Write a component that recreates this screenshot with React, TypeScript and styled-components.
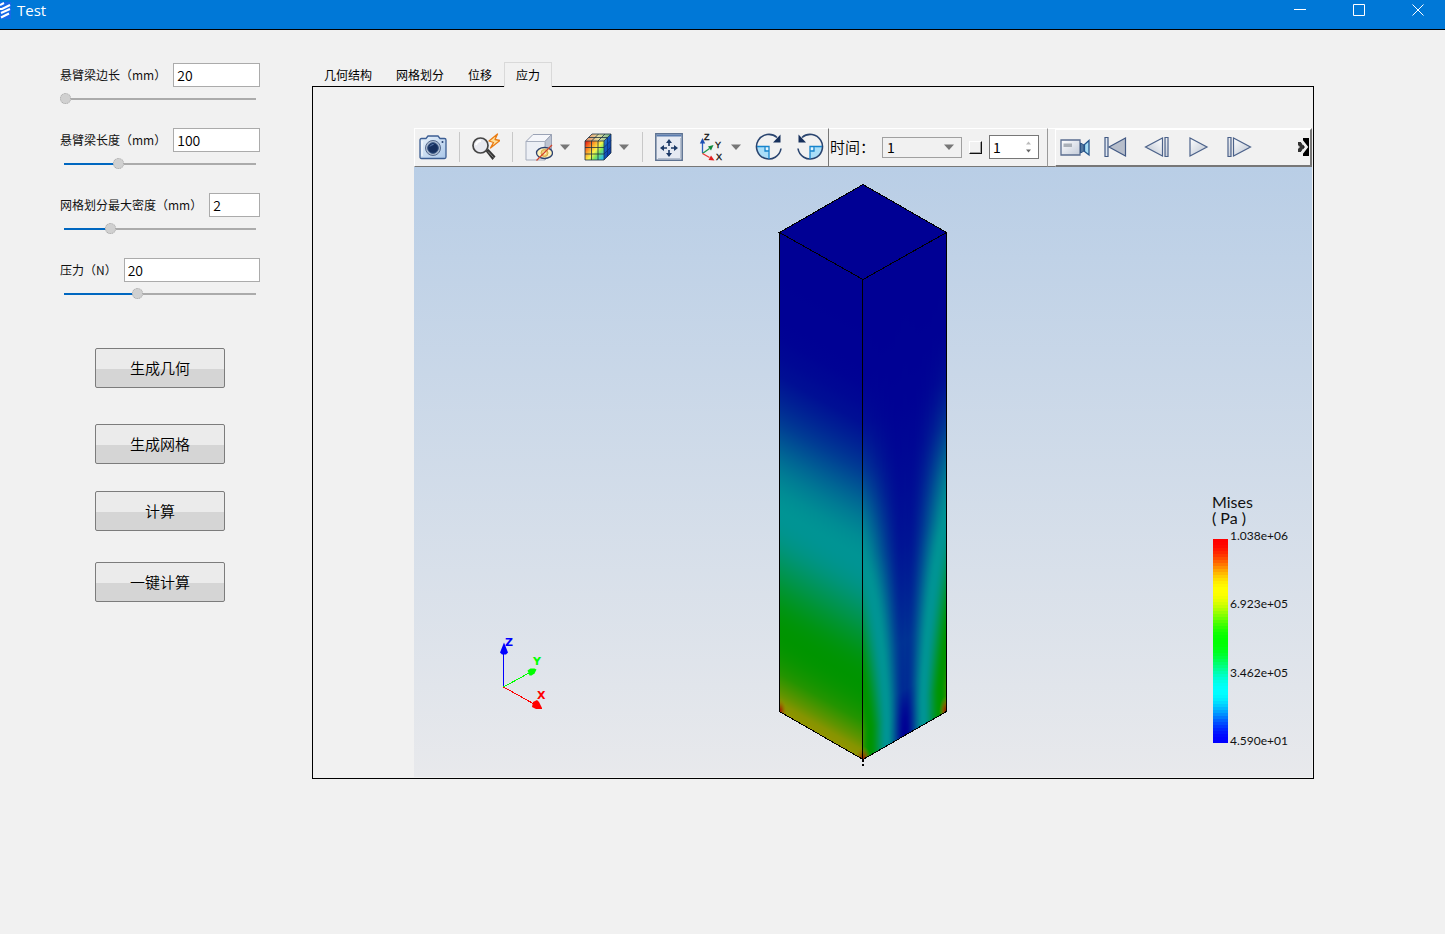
import React, { useState } from 'react';
import styled, { createGlobalStyle } from 'styled-components';

const GlobalStyle = createGlobalStyle`
  *, *::before, *::after { box-sizing: border-box; }
  body {
    margin: 0;
    background: #f1f1f1;
    color: #111;
    font-family: 'Noto Sans CJK SC', 'Noto Sans', sans-serif;
    font-size: 12px;
  }
  button, input, select { font: inherit; color: inherit; margin: 0; padding: 0; }
`;

/* ---------- window frame ---------- */

const TitleBar = styled.header`
  display: flex;
  justify-content: space-between;
  height: 30px;
  background: #0078d7;
  border-bottom: 1px solid #000;
  color: #fff;
`;

const Caption = styled.h1`
  display: flex;
  gap: 6px;
  margin: 0;
  font: 400 15px/20px 'Open Sans', 'Noto Sans', sans-serif;
`;

const AppLogo = styled.svg`
  width: 11px;
  height: 21px;
`;

const WindowControls = styled.div`
  display: flex;
  gap: 5px;
`;

const WindowButton = styled.button`
  display: flex;
  justify-content: center;
  width: 54px;
  height: 20px;
  border: 0;
  background: none;
  color: #fff;
`;

/* ---------- page ---------- */

const Page = styled.main`
  display: flex;
  gap: 52px;
  padding: 32px 131px 32px 60px;
`;

const Sidebar = styled.form`
  flex: none;
  width: 200px;
`;

const Fields = styled.div`
  display: flex;
  flex-direction: column;
  gap: 24px;
  padding-top: 1px;
`;

const FieldRow = styled.div`
  display: flex;
  align-items: center;
  gap: 7px;
  height: 24px;
`;

const FieldLabel = styled.label`
  flex: none;
  white-space: nowrap;
  line-height: 24px;
`;

const TextBox = styled.input`
  flex: 1;
  min-width: 0;
  height: 24px;
  padding: 0 3px;
  border: 1px solid #ababab;
  background: #fff;
  color: #000;
  font-size: 14px;
  font-weight: 350;
`;

const Slider = styled.input<{ $fill: number }>`
  appearance: none;
  display: block;
  width: 100%;
  height: 11px;
  margin-top: 6px;
  background: linear-gradient(to right, #0067c0 ${p => p.$fill}%, #ababab ${p => p.$fill}%)
    center / calc(100% - 8px) 2px no-repeat;
  &::-webkit-slider-thumb {
    appearance: none;
    width: 11px;
    height: 11px;
    border: 1px dotted #a8a8a8;
    border-radius: 50%;
    background: #d0d0d0;
  }
`;

const Actions = styled.div`
  display: flex;
  flex-direction: column;
  align-items: center;
  margin-top: 49px;
`;

const ActionButton = styled.button<{ $above: number }>`
  width: 130px;
  height: 40px;
  margin-top: ${p => p.$above}px;
  padding-bottom: 2px;
  border: 1px solid #7c7c7c;
  border-radius: 2px;
  background: linear-gradient(#ebebeb 0 53%, #d5d5d5 53%);
  color: #000;
  font-size: 15px;
  font-weight: 350;
`;

/* ---------- tabs ---------- */

const Workspace = styled.section`
  flex: 1;
  min-width: 0;
`;

const TabList = styled.div`
  display: flex;
  position: relative;
  z-index: 1;
`;

const Tab = styled.button<{ $active: boolean }>`
  height: 25px;
  margin-bottom: -1px;
  padding: 0 11px 2px;
  border: 1px solid ${p => (p.$active ? '#d9d9d9' : 'transparent')};
  border-bottom: 0;
  background: ${p => (p.$active ? '#f1f1f1' : 'none')};
  color: #000;
`;

const TabPanel = styled.div`
  padding: 41px 1px 1px 101px;
  border: 1px solid #000;
`;

/* ---------- toolbar ---------- */

const Toolbar = styled.div`
  display: flex;
  height: 39px;
`;

const ToolSection = styled.div`
  display: flex;
  align-items: center;
  gap: 13px;
  padding: 0 4px 1px;
  border-top: 1px solid #fff;
  border-left: 1px solid #fff;
  border-bottom: 1px solid #777;
`;

const TimeSection = styled(ToolSection)`
  gap: 7px;
  flex: none;
  width: 220px;
  padding: 0 8px 1px 1px;
  border-left: 1px solid #777;
  border-right: 1px solid #999;
`;

const ToolGap = styled.div`
  width: 7px;
  border-top: 1px solid #fff;
  border-bottom: 1px solid #777;
`;

const PlaySection = styled(ToolSection)`
  flex: 1;
  min-width: 0;
  gap: 13px;
  padding: 0 1px 1px 4px;
  border-top-width: 2px;
  border-bottom-width: 2px;
  border-right: 2px solid #777;
`;

const ToolDivider = styled.span`
  width: 1px;
  height: 30px;
  margin: 0 -1px;
  background: #c8c8c8;
`;

const ToolButton = styled.button<{ $w?: number }>`
  display: flex;
  flex: none;
  align-items: center;
  width: ${p => p.$w ?? 28}px;
  height: 28px;
  border: 0;
  background: none;
`;

const MenuButton = styled(ToolButton)`
  width: 46px;
  gap: 6px;
`;

const MoreButton = styled(ToolButton)`
  width: 11px;
  margin-left: auto;
`;

const TimeLabel = styled.label`
  flex: none;
  width: 45px;
  font-size: 15px;
  font-weight: 350;
  line-height: 20px;
  color: #000;
  white-space: nowrap;
`;

const SelectBox = styled.span`
  display: flex;
  align-items: center;
  flex: 1;
  height: 21px;
  padding-right: 6px;
  border: 1px solid #a0a0a0;
`;

const TimeSelect = styled.select`
  appearance: none;
  flex: 1;
  min-width: 0;
  height: 19px;
  padding-left: 4px;
  border: 0;
  background: none;
  color: #000;
  font-size: 14px;
  line-height: 19px;
`;

const LoopBox = styled.input`
  appearance: none;
  width: 13px;
  height: 13px;
  border: 1px solid #fff;
  border-right: 1px solid #111;
  border-bottom: 1px solid #111;
  box-shadow: inset -1px -1px #a0a0a0;
`;

const SpinBox = styled.span`
  display: flex;
  align-items: center;
  width: 50px;
  height: 24px;
  padding-right: 6px;
  border: 1px solid #777;
  background: #fff;
`;

const SpinInput = styled.input`
  flex: 1;
  min-width: 0;
  height: 22px;
  padding-left: 3px;
  border: 0;
  background: none;
  color: #000;
  font-size: 14px;
`;

/* ---------- 3D view ---------- */

const Viewport = styled.div`
  display: grid;
  grid-template-columns: 1fr auto 1fr;
  height: 610px;
  background: linear-gradient(#b9cee6, #e8e9ec);
`;

const TriadArea = styled.div`
  align-self: end;
  padding: 0 0 64px 84px;
  line-height: 0;
`;

const BeamArea = styled.div`
  padding-top: 16px;
`;

const Legend = styled.div`
  justify-self: end;
  align-self: end;
  width: 101px;
  padding-bottom: 29px;
  font-family: Lato, 'Noto Sans', sans-serif;
`;

const LegendTitle = styled.div`
  margin-bottom: 3px;
  padding-left: 1px;
  font-size: 16px;
  line-height: 16px;
  white-space: pre;
`;

const LegendScale = styled.div`
  display: flex;
  align-items: flex-end;
  gap: 2px;
  padding-left: 2px;
`;

const LegendBar = styled.svg`
  width: 15px;
  height: 204px;
  margin-bottom: 5px;
`;

const LegendLabels = styled.div`
  display: flex;
  flex-direction: column;
  justify-content: space-between;
  height: 219px;
  font-size: 12px;
  line-height: 14px;
`;

/* ---------- stress colours ---------- */

const KEYS = [
  [0, 0, 1],
  [0, 1, 1],
  [0, 1, 0],
  [1, 1, 0],
  [1, 0, 0],
];

function stressColor(t: number, light: number) {
  const x = Math.min(0.9999, Math.max(0, t)) * 4;
  const i = Math.floor(x);
  const f = x - i;
  const e = f * f * (3 - 2 * f);
  const c = KEYS[i].map((k, n) => Math.round((k + (KEYS[i + 1][n] - k) * e) * light));
  return `rgb(${c[0]},${c[1]},${c[2]})`;
}

function interpolate(points: number[][], v: number) {
  for (let i = 1; i < points.length; i++) {
    const [x1, y1] = points[i];
    const [x0, y0] = points[i - 1];
    if (v <= x1) return y0 + ((y1 - y0) * (v - x0)) / (x1 - x0);
  }
  return points[points.length - 1][1];
}

const BENDING = [[0, 0], [0.2, 0.015], [0.3, 0.05], [0.4, 0.11], [0.5, 0.185], [0.59, 0.25], [0.84, 0.5], [0.92, 0.58], [0.96, 0.65], [0.98, 0.7], [1, 0.75]];
const SHEAR = [[0, 0], [0.3, 0.02], [0.6, 0.06], [0.8, 0.1], [0.9, 0.09], [0.96, 0.03], [1, 0]];
const STATIONS = Array.from({ length: 51 }, (_, i) => i / 50);
const COLUMNS = Array.from({ length: 84 }, (_, i) => i);

function sideStress(column: number, v: number) {
  const d = Math.abs(column + 0.5 - 42) / 42;
  return Math.hypot(Math.min(0.6, interpolate(BENDING, v)) * Math.pow(d, 1.05), interpolate(SHEAR, v) * (1 - d));
}

function Beam() {
  return (
    <svg width="170" height="588" viewBox="778 183 170 588" role="img" aria-label="Mises">
      <defs>
        <linearGradient id="front" x1="0" y1="0" x2="0" y2="1">
          {STATIONS.map(v => (
            <stop key={v} offset={v} stopColor={stressColor(interpolate(BENDING, v), 148)} />
          ))}
        </linearGradient>
        {COLUMNS.map(c => (
          <linearGradient key={c} id={`side${c}`} x1="0" y1="0" x2="0" y2="1">
            {STATIONS.map(v => (
              <stop key={v} offset={v} stopColor={stressColor(sideStress(c, v), 148)} />
            ))}
          </linearGradient>
        ))}
        <radialGradient id="hot">
          <stop offset="0" stopColor="#a01000" />
          <stop offset=".4" stopColor="#985000" stopOpacity=".8" />
          <stop offset="1" stopColor="#949400" stopOpacity="0" />
        </radialGradient>
        <clipPath id="sides">
          <path d="M779.500 232.500 863 280l83.500-47.500v479L863 759.500l-83.500-48z" />
        </clipPath>
      </defs>
      <path d="M863 184.500 946.500 232.500v40L863 320l-83.500-47.500v-40z" fill="#000094" />
      <g clipPath="url(#sides)">
        <g transform="translate(779 232) skewY(29.74)">
          <rect width="84" height="480" fill="url(#front)" />
        </g>
        <g shapeRendering="crispEdges">
          {COLUMNS.map(c => (
            <rect key={c} x={863 + c} y={280 - c * 0.5714} width="1" height="481" fill={`url(#side${c})`} />
          ))}
        </g>
        <ellipse cx="780" cy="711" rx="7" ry="13" fill="url(#hot)" />
        <ellipse cx="863" cy="759" rx="8" ry="13" fill="url(#hot)" />
        <ellipse cx="946" cy="711" rx="7" ry="15" fill="url(#hot)" />
      </g>
      <g fill="none" stroke="#000" shapeRendering="crispEdges">
        <path d="M863 184.500 946.500 232.500 863 279.500l-83.500-47zM779.500 232.500v479L863 759.500l83.500-48v-479M862.500 279.500v480" />
        <path d="M863 759v3M863 764v2" strokeWidth="2" />
      </g>
    </svg>
  );
}

function Triad() {
  return (
    <svg width="50" height="76" viewBox="498 637 50 76" role="img" aria-label="X Y Z">
      <g shapeRendering="crispEdges" strokeWidth="1">
        <path d="M503.500 687v-34" stroke="#00f" />
        <path d="M503.500 687 529 673" stroke="#0f0" />
        <path d="M503.500 687 534 704" stroke="#f00" />
      </g>
      <path d="M504 642.500l4 10-2 2h-4l-2-2z" fill="#00f" />
      <path d="M527.500 670.500l3-2h4l2 1-2 4-3 2h-2z" fill="#0f0" />
      <path d="M533 702l4-2 2 2 3 6v1h-6l-4-2z" fill="#f00" />
      <g fontFamily="'DejaVu Sans', sans-serif" fontWeight="700" fontSize="11">
        <text x="505" y="646" fill="#00f">Z</text>
        <text x="533" y="665" fill="#0f0">Y</text>
        <text x="537" y="699" fill="#f00">X</text>
      </g>
    </svg>
  );
}

const BANDS = Array.from({ length: 68 }, (_, i) => i);

/* ---------- icons ---------- */

const DropArrow = () => (
  <svg width="12" height="8" viewBox="0 0 12 8"><path d="M1 1.500h10L6 7z" fill="#777" /></svg>
);

const CameraIcon = () => (
  <svg width="28" height="28" viewBox="0 0 28 28">
    <defs>
      <linearGradient id="cam" x2="1" y2="1"><stop stopColor="#eaf3fb" /><stop offset="1" stopColor="#a9c6e8" /></linearGradient>
    </defs>
    <path d="M1 7Q1 5.500 2.500 5.500H7l2-2.500h10l2 2.500h4.500Q27 5.500 27 7v17q0 1.500-1.500 1.500h-23Q1 25.500 1 24z" fill="url(#cam)" stroke="#3c5e93" strokeWidth="1.300" />
    <path d="M3 8v15" stroke="#fff" />
    <circle cx="14" cy="15" r="7.500" fill="#aebdd2" stroke="#53688c" />
    <circle cx="14" cy="15" r="5.300" fill="#17305f" stroke="#31507f" />
    <path d="M11 13.500q1-2 3.500-2" stroke="#6485b8" fill="none" />
    <circle cx="23.500" cy="9" r="1" fill="#243f70" />
  </svg>
);

const QuickZoomIcon = () => (
  <svg width="28" height="28" viewBox="0 0 28 28">
    <path d="M13.500 18l3-2 7 7.500-3 3.500z" fill="#333" />
    <path d="M16 18.500l5.500 6" stroke="#888" />
    <circle cx="8.500" cy="12.500" r="7.500" fill="#e9eaf0" stroke="#454545" strokeWidth="1.700" />
    <path d="M4 12q1-4 5-4" stroke="#fff" strokeWidth="2" fill="none" />
    <path d="M25.500 1 17 8l4.500 1.500-3 5.500L28 7.500l-5-1z" fill="#ffe09a" stroke="#e97b14" strokeWidth="1.300" strokeLinejoin="round" />
  </svg>
);

const HideBoxIcon = () => (
  <svg width="28" height="28" viewBox="0 0 28 28">
    <path d="M1 8.500 8 1.500h18.500L20 8.500z" fill="#f5f6fa" stroke="#9aa2b5" />
    <path d="M20 8.500 26.500 1.500v18L20 27z" fill="#bcc3d1" stroke="#9aa2b5" />
    <path d="M1 8.500h19V27H1z" fill="#eceff5" stroke="#a5adbd" />
    <ellipse cx="19.500" cy="20" rx="8" ry="5.500" fill="#fff2bd" stroke="#2c416f" strokeWidth="1.300" />
    <circle cx="19.500" cy="20" r="3.500" fill="#f2cf72" stroke="#d4a648" />
    <circle cx="19.500" cy="20" r="1.500" fill="#fff7d5" />
    <path d="M11.500 27.500 27 12" stroke="#d4452b" strokeWidth="1.300" />
  </svg>
);

const FieldCubeIcon = () => (
  <svg width="28" height="28" viewBox="0 0 28 28">
    <defs>
      <linearGradient id="fc" x1="0" y1="0" x2="1" y2=".8">
        <stop offset=".08" stopColor="#ea2c16" /><stop offset=".35" stopColor="#fba12a" />
        <stop offset=".57" stopColor="#f8f34c" /><stop offset=".76" stopColor="#75e45e" />
        <stop offset="1" stopColor="#2bbbe9" />
      </linearGradient>
      <linearGradient id="ft"><stop stopColor="#e4815c" /><stop offset=".5" stopColor="#e7dda0" /><stop offset="1" stopColor="#68b68d" /></linearGradient>
      <linearGradient id="fs" x1="0" y1="0" x2="1" y2="1"><stop stopColor="#55a5cd" /><stop offset=".35" stopColor="#155fc4" /><stop offset="1" stopColor="#052899" /></linearGradient>
    </defs>
    <path d="M1 8 8 1h19l-7 7z" fill="url(#ft)" />
    <path d="M20 8l7-7v19l-7 7z" fill="url(#fs)" />
    <path d="M1 8h19v19H1z" fill="url(#fc)" />
    <path d="M1 8 8 1h19v19l-7 7H1zM1 8h19v19M20 8l7-7M1 14.500h19M1 21h19M7.500 27V8l7-7M14 27V8l7-7M4.500 4.500h19" fill="none" stroke="#1d3141" strokeWidth=".8" />
    <path d="M20 14.500l7-7M20 21l7-7M23.500 4.500v19" stroke="#0b2c72" strokeWidth=".7" />
  </svg>
);

const FitIcon = () => (
  <svg width="28" height="28" viewBox="0 0 28 28">
    <path d="M.8.800h26.400v26.400H.8z" fill="#e6eaf2" stroke="#5d7291" strokeWidth="1.500" />
    <path d="M1.500 1.500h25v2h-25z" fill="#5a7cae" />
    <path d="M25.500 5v20.500H3" stroke="#b5bfcf" fill="none" />
    <path d="M14 6l-3 4h2.200v3h1.600v-3H17zM14 24l-3-4h2.200v-3h1.600v3H17zM5 15l4-3v2.200h3v1.600H9V18zM23 15l-4-3v2.200h-3v1.600h3V18z" fill="#1c3966" />
  </svg>
);

const ViewAxesIcon = () => (
  <svg width="28" height="28" viewBox="0 0 28 28">
    <path d="M6.500 20V9" stroke="#2d5fc0" strokeWidth="1.300" />
    <path d="M6.500 5 3.800 10.500h5.400z" fill="#1f4fb4" />
    <path d="M6.500 20.500l7-5" stroke="#1e9a4b" strokeWidth="1.300" />
    <path d="M17.500 12l-5.500 1.500 3 4z" fill="#118a3c" />
    <path d="M6.500 20.500l7 4" stroke="#e33" strokeWidth="1.300" />
    <path d="M18.500 27.500l-6-.500 2.500-4.500z" fill="#e21d1d" />
    <g fontFamily="'Liberation Sans', sans-serif" fontSize="9" fill="#111" stroke="#111" strokeWidth=".3">
      <text x="8" y="7">Z</text>
      <text x="19" y="15">Y</text>
      <text x="20" y="27">X</text>
    </g>
  </svg>
);

const RotateIcon = ({ reverse = false }: { reverse?: boolean }) => (
  <svg width="28" height="28" viewBox="0 0 28 28">
    <g transform={reverse ? 'matrix(-1 0 0 1 28 0)' : undefined}>
      <path d="M14 13.500V26Q2.500 25 2 13.500z" fill="#a9def8" />
      <path d="M8 13.500h6V20z" fill="#e5f6fe" />
      <path d="M26 15.500A12.300 12.300 0 1 1 22 4.500" fill="none" stroke="#29446f" strokeWidth="1.600" />
      <path d="M2 13.500h12V26M10 14v4h4" fill="none" stroke="#1785cd" strokeWidth="1.300" />
      <path d="M25.500 1.500v8H18z" fill="#17305c" />
    </g>
  </svg>
);

const VideoIcon = () => (
  <svg width="30" height="28" viewBox="0 0 30 28">
    <defs><linearGradient id="vid" x2="1" y2="1"><stop stopColor="#fff" /><stop offset="1" stopColor="#c3cbd9" /></linearGradient></defs>
    <path d="M1 7h19v15H1z" fill="url(#vid)" stroke="#5b6e90" strokeWidth="1.300" />
    <path d="M3.500 10.500h8.500v3.500H3.500z" fill="#aab0b8" />
    <path d="M20.500 10 24 12v6l-3.500 2z" fill="#55789f" stroke="#2d5383" />
    <path d="M29 7.500v14.500L24.500 18.500v-7z" fill="#a7def5" stroke="#24558c" strokeWidth="1.300" />
  </svg>
);

const StepShade = () => (
  <defs><linearGradient id="stp" x2="1" y2="1"><stop stopColor="#fff" /><stop offset="1" stopColor="#b9c2d0" /></linearGradient></defs>
);

const FirstIcon = () => (
  <svg width="26" height="28" viewBox="0 0 26 28">
    <StepShade />
    <g stroke="#435a84" strokeWidth="1.200" fill="#b7becb">
      <path d="M2 4.500h3v19H2z" fill="#dfe7f2" /><path d="M22.500 5v18L6 14z" />
    </g>
  </svg>
);

const StepIcon = ({ back = false }: { back?: boolean }) => (
  <svg width="26" height="28" viewBox="0 0 26 28">
    <g transform={back ? 'matrix(-1 0 0 1 26 0)' : undefined} stroke="#4c628a" strokeWidth="1.200" fill="url(#stp)">
      <path d="M2 4.500h3v19H2z" /><path d="M7.500 5v18L24.500 14z" />
    </g>
  </svg>
);

const PlayIcon = () => (
  <svg width="26" height="28" viewBox="0 0 26 28">
    <path d="M5 5v18l17-9z" stroke="#4c628a" strokeWidth="1.200" fill="url(#stp)" />
  </svg>
);

const MoreIcon = () => (
  <svg width="11" height="18" viewBox="0 0 11 18">
    <path d="M5 0h6v18H5z" fill="#000" />
    <path d="M0 4h3l3 5-3 5H0z" fill="#333" />
    <path d="M0 7l2 2-2 2z" fill="#ddd" />
    <path d="M3.500 2.500 8.500 9l-5 6.500" stroke="#eee" strokeWidth="2.800" fill="none" />
  </svg>
);

/* ---------- content ---------- */

const FIELDS = [
  { id: 'side', label: '悬臂梁边长（mm）', value: 20, min: 20, max: 100 },
  { id: 'length', label: '悬臂梁长度（mm）', value: 100, min: 30, max: 280 },
  { id: 'density', label: '网格划分最大密度（mm）', value: 2, min: 0.8, max: 5.8 },
  { id: 'force', label: '压力（N）', value: 20, min: 1, max: 51 },
];

const ACTIONS = [
  { text: '生成几何', above: 0 },
  { text: '生成网格', above: 36 },
  { text: '计算', above: 27 },
  { text: '一键计算', above: 31 },
];

const TABS = ['几何结构', '网格划分', '位移', '应力'];

function Field({ field }: { field: (typeof FIELDS)[number] }) {
  const [value, setValue] = useState(String(field.value));
  const fill = ((Number(value) - field.min) / (field.max - field.min)) * 100;
  return (
    <div>
      <FieldRow>
        <FieldLabel htmlFor={field.id}>{field.label}</FieldLabel>
        <TextBox id={field.id} value={value} onChange={e => setValue(e.target.value)} />
      </FieldRow>
      <Slider
        type="range"
        aria-label={field.label}
        min={field.min}
        max={field.max}
        step="0.1"
        value={Number(value) || field.min}
        $fill={fill}
        onChange={e => setValue(e.target.value)}
      />
    </div>
  );
}

export default function App() {
  const [tab, setTab] = useState('应力');
  const [frame, setFrame] = useState('1');
  return (
    <>
      <GlobalStyle />
      <TitleBar>
        <Caption>
          <AppLogo viewBox="0 0 11 21">
            <path d="M0 2h11v17H0z" fill="#1668e8" />
            <path d="M0 5l4-2M0 9l2 0 8-4M1 13l9-4M1 17.500l8-4" stroke="#fff" strokeWidth="2" fill="none" />
          </AppLogo>
          Test
        </Caption>
        <WindowControls>
          <WindowButton aria-label="Minimize">
            <svg width="12" height="20" viewBox="0 0 12 20"><path d="M0 9.500h12" stroke="#fff" /></svg>
          </WindowButton>
          <WindowButton aria-label="Maximize">
            <svg width="12" height="20" viewBox="0 0 12 20"><path d="M.5 4.500h11v11H.5z" stroke="#fff" fill="none" /></svg>
          </WindowButton>
          <WindowButton aria-label="Close">
            <svg width="12" height="20" viewBox="0 0 12 20"><path d="M.5 4.500l11 11M11.500 4.500l-11 11" stroke="#fff" /></svg>
          </WindowButton>
        </WindowControls>
      </TitleBar>
      <Page>
        <Sidebar onSubmit={e => e.preventDefault()}>
          <Fields>
            {FIELDS.map(f => <Field key={f.id} field={f} />)}
          </Fields>
          <Actions>
            {ACTIONS.map(a => (
              <ActionButton key={a.text} type="button" $above={a.above}>{a.text}</ActionButton>
            ))}
          </Actions>
        </Sidebar>
        <Workspace>
          <TabList role="tablist">
            {TABS.map(t => (
              <Tab key={t} role="tab" aria-selected={t === tab} $active={t === tab} onClick={() => setTab(t)}>{t}</Tab>
            ))}
          </TabList>
          <TabPanel role="tabpanel">
            <Toolbar>
              <ToolSection>
                <ToolButton aria-label="Snapshot"><CameraIcon /></ToolButton>
                <ToolDivider />
                <ToolButton aria-label="Quick zoom"><QuickZoomIcon /></ToolButton>
                <ToolDivider />
                <MenuButton aria-label="Visibility"><HideBoxIcon /><DropArrow /></MenuButton>
                <MenuButton aria-label="Field display"><FieldCubeIcon /><DropArrow /></MenuButton>
                <ToolDivider />
                <ToolButton aria-label="Fit view"><FitIcon /></ToolButton>
                <MenuButton aria-label="View direction"><ViewAxesIcon /><DropArrow /></MenuButton>
                <ToolButton aria-label="Rotate clockwise"><RotateIcon /></ToolButton>
                <ToolButton aria-label="Rotate counterclockwise"><RotateIcon reverse /></ToolButton>
              </ToolSection>
              <TimeSection>
                <TimeLabel htmlFor="time">时间：</TimeLabel>
                <SelectBox>
                  <TimeSelect id="time"><option>1</option></TimeSelect>
                  <DropArrow />
                </SelectBox>
                <LoopBox type="checkbox" aria-label="Loop" />
                <SpinBox>
                  <SpinInput aria-label="Frame" value={frame} onChange={e => setFrame(e.target.value)} />
                  <svg width="7" height="14" viewBox="0 0 7 14">
                    <path d="M1 4.500h5L3.500 1.500z" fill="#bbb" />
                    <path d="M1 9.500h5l-2.500 3z" fill="#666" />
                  </svg>
                </SpinBox>
              </TimeSection>
              <ToolGap />
              <PlaySection>
                <ToolButton $w={30} aria-label="Record"><VideoIcon /></ToolButton>
                <ToolButton aria-label="First frame"><FirstIcon /></ToolButton>
                <ToolButton aria-label="Previous frame"><StepIcon back /></ToolButton>
                <ToolButton aria-label="Play"><PlayIcon /></ToolButton>
                <ToolButton aria-label="Next frame"><StepIcon /></ToolButton>
                <MoreButton aria-label="More"><MoreIcon /></MoreButton>
              </PlaySection>
            </Toolbar>
            <Viewport>
              <TriadArea><Triad /></TriadArea>
              <BeamArea><Beam /></BeamArea>
              <Legend>
                <LegendTitle>{'Mises\n( Pa )'}</LegendTitle>
                <LegendScale>
                  <LegendBar viewBox="0 0 15 204" shapeRendering="crispEdges">
                    {BANDS.map(i => (
                      <rect key={i} y={i * 3} width="15" height="3" fill={stressColor(1 - i / 67, 255)} />
                    ))}
                  </LegendBar>
                  <LegendLabels>
                    <span>1.038e+06</span>
                    <span>6.923e+05</span>
                    <span>3.462e+05</span>
                    <span>4.590e+01</span>
                  </LegendLabels>
                </LegendScale>
              </Legend>
            </Viewport>
          </TabPanel>
        </Workspace>
      </Page>
    </>
  );
}
